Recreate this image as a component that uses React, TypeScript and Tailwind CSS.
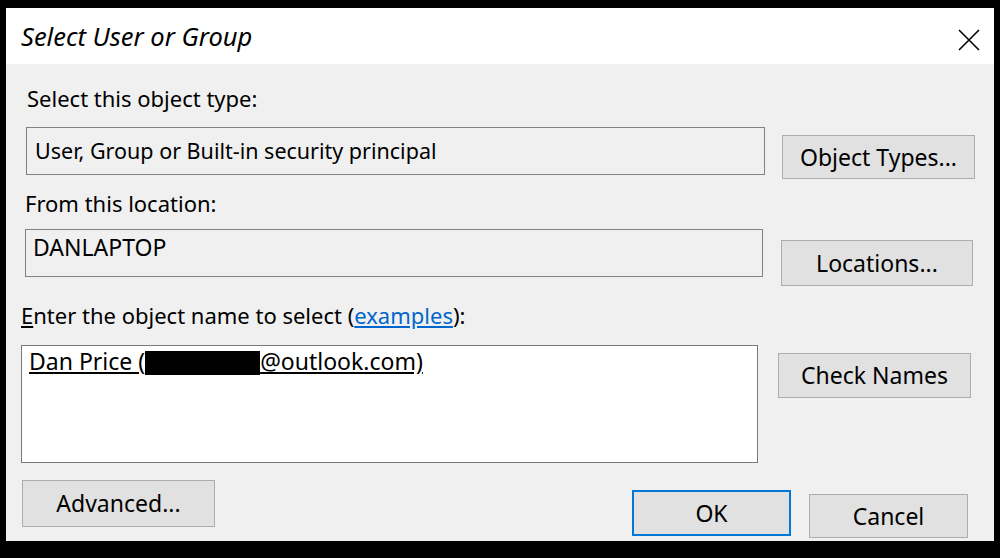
const font = "font-['Noto_Sans',sans-serif]";

function WinButton({
  label,
  className = "",
  primary = false,
}: {
  label: string;
  className?: string;
  primary?: boolean;
}) {
  return (
    <div
      className={`flex items-center justify-center bg-[#e1e1e1] text-[23px] leading-none text-black ${
        primary ? "border-2 border-[#0078d7]" : "border border-[#adadad]"
      } ${className}`}
    >
      {label}
    </div>
  );
}

export default function App() {
  return (
    <div className={`h-[558px] w-[1000px] overflow-hidden bg-black ${font}`}>
      <div className="ml-[6px] mt-[8px] flex h-[533px] w-[988px] flex-col bg-[#f0f0f0]">
        {/* title bar */}
        <div className="flex h-[56px] shrink-0 items-center justify-between bg-white pl-[15px] pr-[14px]">
          <span className="text-[25.5px] italic text-black">Select User or Group</span>
          <svg width="22" height="22" viewBox="0 0 22 22" className="mt-[8px]">
            <path d="M1 1 L21 21 M21 1 L1 21" stroke="#000" strokeWidth="1.6" />
          </svg>
        </div>

        {/* body */}
        <div className="flex flex-col pt-[21px] text-[22px] leading-[26px] text-black">
          <div className="ml-[21px]">Select this object type:</div>
          <div className="ml-[20px] mt-[16px] flex h-[52px] items-start">
            <div className="flex h-[48px] w-[739px] items-center border border-[#828282] pl-[8px] text-[21.5px]">
              User, Group or Built-in security principal
            </div>
            <WinButton label="Object Types..." className="ml-[17px] mt-[8px] h-[44px] w-[193px]" />
          </div>

          <div className="ml-[19px] mt-[11px]">From this location:</div>
          <div className="ml-[19px] mt-[13px] flex h-[58px] items-start">
            <div className="h-[48px] w-[738px] border border-[#828282] pl-[7px] pt-[4px] text-[23px]">
              DANLAPTOP
            </div>
            <WinButton label="Locations..." className="ml-[18px] mt-[11px] h-[46px] w-[192px]" />
          </div>

          <div className="ml-[15px] mt-[15px]">
            <span className="underline">E</span>nter the object name to select (
            <span className="text-[#0066cc] underline">examples</span>):
          </div>
          <div className="ml-[15px] mt-[17px] flex items-start">
            <div className="h-[118px] w-[737px] border border-[#7a7a7a] bg-white pl-[7px] pt-[2px] text-[23px]">
              <span className="underline">
                Dan Price (
                <span className="inline-block h-[24px] w-[115px] bg-black align-[-5px]" />
                @outlook.com)
              </span>
            </div>
            <WinButton label="Check Names" className="ml-[20px] mt-[8px] h-[45px] w-[193px]" />
          </div>

          <div className="mt-[17px] flex items-start">
            <WinButton label="Advanced..." className="ml-[16px] h-[47px] w-[193px]" />
            <WinButton label="OK" primary className="ml-[417px] mt-[10px] h-[46px] w-[159px]" />
            <WinButton label="Cancel" className="ml-[18px] mt-[14px] h-[44px] w-[159px]" />
          </div>
        </div>
      </div>
    </div>
  );
}
